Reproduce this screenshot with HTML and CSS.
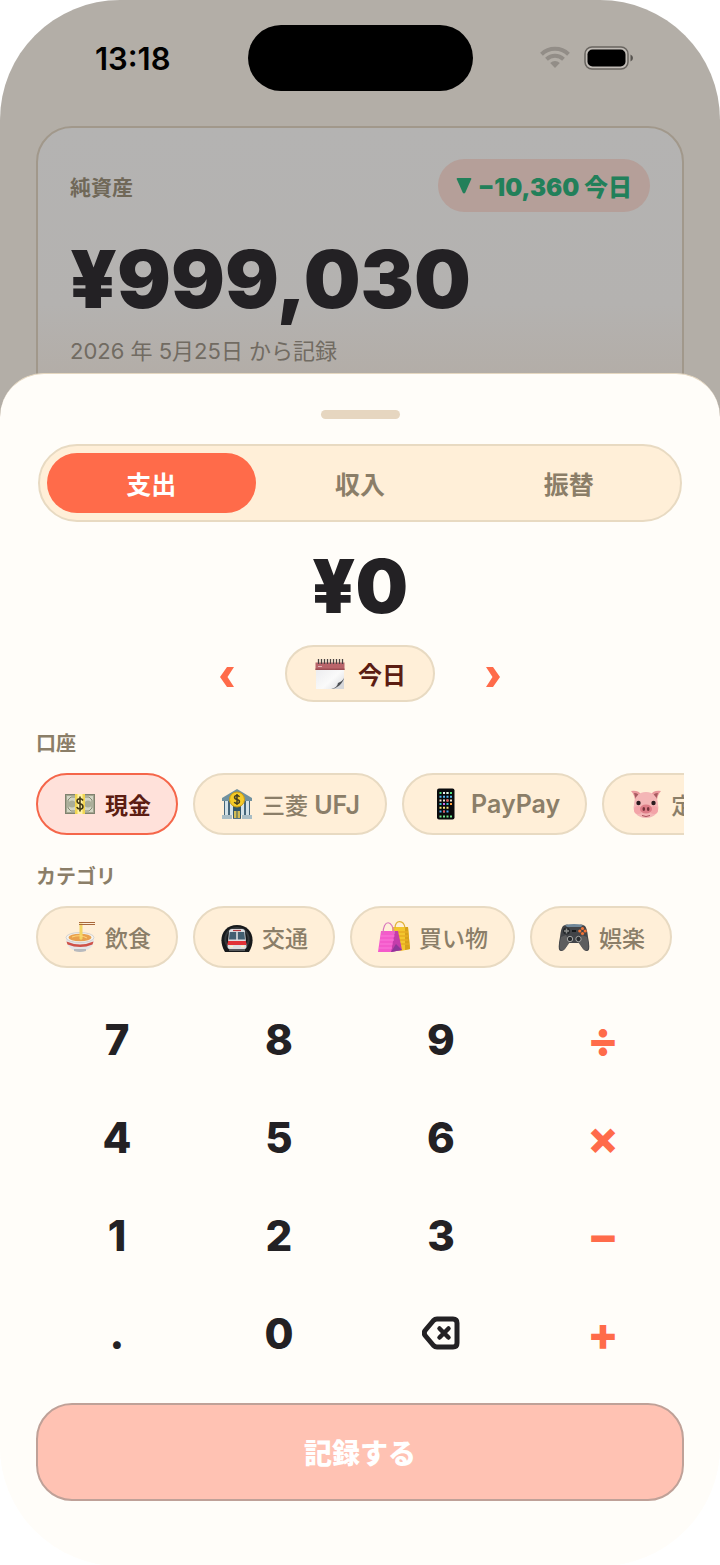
FILE: index.html
```html
<!DOCTYPE html>
<html lang="ja">
<head>
<meta charset="utf-8">
<meta name="viewport" content="width=device-width, initial-scale=1">
<title>記録</title>
<link rel="stylesheet" href="styles.css">
</head>
<body>
<div class="phone">
  <div class="backdrop">
    <header class="status">
      <time class="clock">13:18</time>
      <div class="island"></div>
      <div class="status-icons">
        <svg class="wifi" viewBox="0 0 30 22" aria-hidden="true"><g fill="none" stroke="currentColor" stroke-width="4"><path d="M1.500 8.200a19.500 19.500 0 0 1 27 0"/><path d="M6.500 13.200a12.500 12.500 0 0 1 17 0"/></g><path fill="currentColor" d="M10.200 17a7 7 0 0 1 9.600 0L15 22z"/></svg>
        <svg class="battery" viewBox="0 0 50 24" aria-hidden="true"><rect x="1" y="1" width="43" height="22" rx="7" fill="#c0bbb5" stroke="#68645f" stroke-width="1.500"/><rect x="3.500" y="3.500" width="38" height="17" rx="5" fill="#000"/><path d="M46.500 8.500q2.500 1 2.500 3.500t-2.500 3.500z" fill="#56524e"/></svg>
      </div>
    </header>
    <section class="worth">
      <div class="worth-head">
        <h2 class="worth-title">純資産</h2>
        <p class="delta"><svg class="delta-mark" viewBox="0 0 16 16" aria-hidden="true"><path d="M1.500 0h13q1.200 0 .7 1.200l-6 13.500q-1.200 1.500-2.400 0l-6-13.500Q.3 0 1.500 0z" fill="currentColor"/></svg><span>−10,360 今日</span></p>
      </div>
      <p class="worth-sum">¥999,030</p>
      <p class="worth-since">2026 年 5月25日 から記録</p>
    </section>
  </div>

  <main class="sheet">
    <div class="grabber"></div>
    <div class="segments">
      <button class="segment segment-on" type="button">支出</button>
      <button class="segment" type="button">収入</button>
      <button class="segment" type="button">振替</button>
    </div>
    <output class="amount">¥0</output>
    <div class="dates">
      <button class="step" type="button" aria-label="前の日"><svg viewBox="0 0 16 22" aria-hidden="true"><path d="M8 1h7L8.500 11 15 21H8L1 11z" fill="currentColor"/></svg></button>
      <button class="day" type="button">
        <svg class="emoji" viewBox="0 0 32 32" aria-hidden="true">
          <defs><linearGradient id="paper" x2="1" y2="1"><stop stop-color="#e9e9ec"/><stop offset=".6" stop-color="#fafafa"/><stop offset="1" stop-color="#d9dade"/></linearGradient></defs>
          <path d="M2 5h28v18l-8 8H2z" fill="url(#paper)"/><path d="M1.500 4.500h29V12h-29z" fill="#b9646a"/><path d="M1.500 10.500h29V12h-29z" fill="#9c4d53"/><path d="M4 8.500h4" stroke="#e0b5b6"/>
          <path d="M4.500 1v5M7.500 1v5M10.500 1v5M13.500 1v5M16.500 1v5M19.500 1v5M22.500 1v5M25.500 1v5M28.500 1v5" stroke="#4a4444" stroke-width="1.300"/>
          <path d="M17 31c6-1 6-5 6-6 4 0 7-3 7-7v13z" fill="#d6d7da"/><path d="M17 31c6-1 7-5 7-6 3-1 5-3 6-5-1 5-7 11-13 11z" fill="#4d5054"/>
        </svg>
        <span>今日</span>
      </button>
      <button class="step" type="button" aria-label="次の日"><svg viewBox="0 0 16 22" aria-hidden="true"><path d="M8 1H1l6.500 10L1 21h7l7-10z" fill="currentColor"/></svg></button>
    </div>

    <h3 class="label">口座</h3>
    <div class="chips">
      <button class="chip chip-on" type="button">
        <svg class="emoji" viewBox="0 0 32 32" aria-hidden="true"><path d="M1 6h30v20H1z" fill="#7f826f"/><path d="M2.500 7.500h27v17h-27z" fill="#d3d5c4" stroke="#a3a590"/><path d="M4 12l3-3h18l3 3v8l-3 3H7l-3-3z" fill="none" stroke="#888b76"/><circle cx="8" cy="16" r="3.500" fill="#a9ad98"/><circle cx="24" cy="16" r="3.500" fill="#a9ad98"/><path d="M11 6h10v20H11z" fill="#f2d552"/><path d="M13.500 6h5v20h-5z" fill="#fff3a8"/><path d="M19 12.500q-1-1.700-3-1.700c-4 0-3.800 4.300 0 5s4 5.200 0 5.200q-2.500 0-3.200-2M16 8.500v15" fill="none" stroke="#423817" stroke-width="1.600"/></svg>
        <span>現金</span>
      </button>
      <button class="chip" type="button">
        <svg class="emoji" viewBox="0 0 32 32" aria-hidden="true"><path d="M1 10L16 1l15 9v3H1z" fill="#70919f"/><path d="M3 13h26v14H3z" fill="#45667a"/><path d="M4 13h3v14H4zM9 13h3v14H9zM20 13h3v14h-3zM25 13h3v14h-3z" fill="#d4e2e8"/><path d="M12 16h8v14h-8z" fill="#325668"/><path d="M13 23h2.500v7H13zM16.500 23H19v7h-2.500z" fill="#d3bc54"/><path d="M1 27h10v4H1zM21 27h10v4H21z" fill="#a9bdc5"/><path d="M12 30h8v1h-8z" fill="#567485"/><circle cx="16" cy="11.500" r="7.500" fill="#f5cb28" stroke="#c99a12"/><path d="M18.500 8.800q-.8-1.300-2.500-1.300c-3.300 0-3.200 3.400 0 4s3.300 4 0 4q-2 0-2.700-1.500M16 6v11" fill="none" stroke="#463f21" stroke-width="1.500"/></svg>
        <span>三菱 <span class="latin">UFJ</span></span>
      </button>
      <button class="chip" type="button">
        <svg class="emoji" viewBox="0 0 32 32" aria-hidden="true"><rect x="7" y="0.500" width="17.500" height="31" rx="2" fill="#090a0c"/><g fill="none" stroke-width="2" stroke-dasharray="2 1.500"><path d="M9.500 5h13" stroke="#54e179"/><path d="M13 5h2M16.500 5h2" stroke="#eee"/><path d="M9.500 8.700h13" stroke="#55b9ed"/><path d="M9.500 12.400h13" stroke="#f7ead3"/><path d="M16.500 12.400h2" stroke="#f05354"/><path d="M9.500 16.100h13" stroke="#36c6d1"/><path d="M13 16.100h2" stroke="#c96ff0"/><path d="M20 16.100h2" stroke="#ff9e3b"/><path d="M9.500 19.800h9" stroke="#f5e77a"/><path d="M9.500 23.500h9" stroke="#4ba8f5"/><path d="M13 23.500h2" stroke="#ee5353"/><path d="M9.500 28.500h13" stroke="#71e68d"/></g></svg>
        <span class="latin">PayPay</span>
      </button>
      <button class="chip" type="button">
        <svg class="emoji" viewBox="0 0 32 32" aria-hidden="true"><path d="M1 3q8-1 10 4l-6 7Q5 7 1 3zM31 3q-8-1-10 4l6 7q0-7 4-11z" fill="#e9979b"/><path d="M4 5q5 0 5 4l-3 3zM28 5q-5 0-5 4l3 3z" fill="#a75b60"/><path d="M16 4c8 0 12 6 12 13 2 6-3 13-12 13S2 23 4 17C4 10 8 4 16 4z" fill="#f4b6b6"/><ellipse cx="8" cy="22" rx="4" ry="4" fill="#f3a4a8"/><ellipse cx="24" cy="22" rx="4" ry="4" fill="#f3a4a8"/><ellipse cx="16" cy="21" rx="6" ry="4.500" fill="#dd7c86"/><ellipse cx="13.800" cy="21" rx="1.300" ry="2" fill="#75323a"/><ellipse cx="18.200" cy="21" rx="1.300" ry="2" fill="#75323a"/><circle cx="8.500" cy="15" r="2.200" fill="#291b1e"/><circle cx="23.500" cy="15" r="2.200" fill="#291b1e"/><path d="M12 27.500q4 2 8 0" fill="none" stroke="#a9505a"/></svg>
        <span>定期</span>
      </button>
    </div>

    <h3 class="label">カテゴリ</h3>
    <div class="chips">
      <button class="chip" type="button">
        <svg class="emoji" viewBox="0 0 32 32" aria-hidden="true"><path d="M2 17c0 7 4 10 7 12h14c4-2 7-5 7-12z" fill="#e5e5e7"/><path d="M2.500 20.500q13.500 6 27 0l-1 3q-12 5-25 0z" fill="#cf5148"/><path d="M10 28h12v2q-6 2-12 0z" fill="#b8babe"/><ellipse cx="16" cy="16.500" rx="14" ry="5" fill="#f4f3ef" stroke="#c5c5c7" stroke-width=".7"/><ellipse cx="16" cy="16.500" rx="11.500" ry="3.800" fill="#e9a04e"/><path d="M15.500 18V2.500h3V18q-1.500 1.500-3 0z" fill="#f3d563"/><path d="M8 16q8-3 15 1" fill="none" stroke="#ffd778"/><path d="M15 1.500h16M15 3.500h16" fill="none" stroke="#a8683c" stroke-width="1.200"/></svg>
        <span>飲食</span>
      </button>
      <button class="chip" type="button">
        <svg class="emoji" viewBox="0 0 32 32" aria-hidden="true"><path d="M4 31C-4 18 2 4 16 4s20 14 12 27z" fill="#17191b"/><path d="M7 26C1 17 6 7 16 7s15 10 9 19" fill="none" stroke="#34383b" stroke-width="2"/><path d="M8 11q0-3 3-3h10q3 0 3 3l1.500 15q0 2-2 2h-15q-2 0-2-2z" fill="#dedfe2"/><path d="M8.700 11h6.500v7.500H8zM16.800 11h6.500l.7 7.500h-7.200z" fill="#425f71"/><path d="M7 20h18l.5 4H6.500z" fill="#e13238"/><path d="M9 25.500h3M20 25.500h3" stroke="#fff4c2" stroke-width="1.500"/><path d="M8 28h16v2H8z" fill="#55585b"/><path d="M12 9.500h8" stroke="#b53a3e" stroke-width="1.200"/></svg>
        <span>交通</span>
      </button>
      <button class="chip" type="button">
        <svg class="emoji" viewBox="0 0 32 32" aria-hidden="true"><path d="M14 6h16l2 22-9 2-8-2z" fill="#f3c62d"/><path d="M27 6h3l2 22-5 1z" fill="#d7a11a"/><path d="M16 11h14M16 15h14M16 19h14M16 23h15" stroke="#e7ac22" stroke-width="1.300"/><path d="M17 7c0-9 9-8 10 0" fill="none" stroke="#e0b238" stroke-width="1.200"/><path d="M3 10h16l4 19-10 2H0z" fill="#f45acb"/><path d="M17 10h3l4 19-11 2z" fill="#c43cab"/><path d="M13 31l5-8 6 6z" fill="#8e3799"/><path d="M2.500 15h14M2 19h14M1.500 23h13M1 27h13" stroke="#fa78d9"/><path d="M5 13C5-2 15-2 16 13" fill="none" stroke="#d876bd" stroke-width="1.200"/></svg>
        <span>買い物</span>
      </button>
      <button class="chip" type="button">
        <svg class="emoji" viewBox="0 0 32 32" aria-hidden="true"><path d="M5 5q4-3 8 0h6q4-3 8 0 2 2 3 11 3 14-1 14-3 1-7-8H10q-4 9-7 8-4 0-1-14Q3 7 5 5z" fill="#424448"/><path d="M3 16l5-2 4 7-5 7q-3 3-5 0-1-4 1-12zM29 16l-5-2-4 7 5 7q3 3 5 0 1-4-1-12z" fill="#5d5d5e"/><path d="M7 4q9-2 18 0l-2 2H9z" fill="#71889a"/><circle cx="8.500" cy="10" r="3.500" fill="#25282b"/><path d="M8.500 7.500v5M6 10h5" stroke="#8b8c8b" stroke-width="1.500"/><circle cx="12" cy="18" r="2.700" fill="#292c2f" stroke="#a5a5a3"/><circle cx="20.500" cy="18" r="2.700" fill="#292c2f" stroke="#a5a5a3"/><g fill="#f37436"><circle cx="24.500" cy="7.500" r="1.600"/><circle cx="21.800" cy="10" r="1.600"/><circle cx="27.200" cy="10" r="1.600"/><circle cx="24.500" cy="12.500" r="1.600"/></g><path d="M14 10h4" stroke="#17191b" stroke-width="2"/></svg>
        <span>娯楽</span>
      </button>
    </div>

    <div class="keys">
      <button class="key" type="button">7</button><button class="key" type="button">8</button><button class="key" type="button">9</button><button class="key key-op" type="button">÷</button>
      <button class="key" type="button">4</button><button class="key" type="button">5</button><button class="key" type="button">6</button><button class="key key-op" type="button">×</button>
      <button class="key" type="button">1</button><button class="key" type="button">2</button><button class="key" type="button">3</button><button class="key key-op" type="button">−</button>
      <button class="key" type="button">.</button><button class="key" type="button">0</button>
      <button class="key" type="button" aria-label="削除"><svg class="erase" viewBox="0 0 38 34" fill="none" stroke="currentColor" stroke-linecap="round" stroke-linejoin="round" aria-hidden="true"><path d="M15 3h16q4 0 4 4v20q0 4-4 4H15q-2 0-3.500-1.500L3.500 20q-2.500-3 0-6l8-9.500Q13 3 15 3z" stroke-width="5"/><path d="M17.500 12.500l9 9M26.500 12.500l-9 9" stroke-width="4.500"/></svg></button>
      <button class="key key-op" type="button">+</button>
    </div>
    <button class="save" type="button">記録する</button>
  </main>
</div>
</body>
</html>
```
FILE: styles.css
```css
* {
  box-sizing: border-box;
}

body {
  margin: 0;
  background: #fff;
  color: #232124;
  font-family: Inter, "Noto Sans CJK JP", sans-serif;
}

h2, h3, p {
  margin: 0;
}

button {
  margin: 0;
  padding: 0;
  border: 0;
  background: none;
  color: inherit;
  font: inherit;
  white-space: nowrap;
}

svg {
  display: block;
  flex: none;
}

.phone {
  overflow: hidden;
  border-radius: 120px;
  background: linear-gradient(#b3aea7 50%, #fffdf9 50%);
}

.backdrop {
  padding: 25px 36px 0;
}

/* status bar */
.status {
  display: grid;
  grid-template-columns: 1fr 225px 1fr;
  align-items: center;
  color: #000;
}

.clock {
  padding-right: 18px;
  font-size: 31px;
  font-weight: 600;
  text-align: center;
}

.island {
  height: 66px;
  border-radius: 33px;
  background: #000;
}

.status-icons {
  display: flex;
  justify-content: center;
  gap: 14px;
  padding-left: 18px;
}

.wifi {
  width: 30px;
  height: 22px;
  color: #928d87;
}

.battery {
  width: 50px;
  height: 24px;
}

/* net worth card */
.worth {
  margin-top: 35px;
  padding: 31px 32px 56px;
  border: 2px solid #a1988b;
  border-radius: 36px;
  background: linear-gradient(#b4b3b2, #b4b2b0 60%, #b3ada7 85%);
}

.worth-head {
  display: flex;
  align-items: center;
  justify-content: space-between;
}

.worth-title {
  color: #706858;
  font-size: 21px;
  font-weight: 700;
}

.delta {
  display: flex;
  align-items: center;
  gap: 6px;
  height: 53px;
  padding: 0 18px;
  border-radius: 27px;
  background: #b59f99;
  color: #22805a;
  font-size: 24px;
  font-weight: 900;
}

.delta-mark {
  width: 16px;
  height: 16px;
}

.worth-sum {
  margin-top: 19px;
  font-size: 80px;
  font-weight: 900;
  line-height: 96px;
}

.worth-since {
  margin-top: 9px;
  color: #716b62;
  font-size: 22px;
  line-height: 30px;
}

/* entry sheet */
.sheet {
  display: flex;
  flex-direction: column;
  margin-top: -51px;
  padding: 36px 36px 65px;
  border-top: 1px solid #e5d7c0;
  border-radius: 44px 44px 0 0;
  background: #fffdf9;
  position: relative;
}

.grabber {
  align-self: center;
  width: 79px;
  height: 9px;
  border-radius: 5px;
  background: #e6d6c0;
}

.segments {
  display: grid;
  grid-template-columns: repeat(3, 1fr);
  margin: 25px 2px 0;
  padding: 7px;
  border: 2px solid #e8dac2;
  border-radius: 39px;
  background: #ffefd8;
}

.segment {
  height: 60px;
  border-radius: 30px;
  color: #8b7e68;
  font-size: 25px;
  font-weight: 700;
}

.segment-on {
  background: #ff6b4a;
  color: #fff;
}

.amount {
  margin-top: 20px;
  font-size: 74px;
  font-weight: 900;
  line-height: 88px;
  text-align: center;
}

.dates {
  display: flex;
  align-items: center;
  justify-content: center;
  gap: 28px;
  margin-top: 15px;
}

.step {
  display: grid;
  place-items: center;
  width: 60px;
  height: 56px;
  padding-top: 7px;
  color: #ff6b4a;
}

.step svg {
  width: 16px;
  height: 22px;
}

.day,
.chip {
  display: flex;
  flex: none;
  align-items: center;
  gap: 9px;
  height: 62px;
  padding: 0 25px 0 26px;
  border: 2px solid #e8dac2;
  border-radius: 31px;
  background: #ffefd8;
  color: #8b7e68;
  font-size: 23px;
  font-weight: 500;
}

.day {
  gap: 12px;
  height: 57px;
  padding: 0 27px;
  color: #5c1d12;
  font-size: 24px;
  font-weight: 700;
}

.latin {
  font-size: 25px;
  font-weight: 600;
}

.emoji {
  width: 32px;
  height: 32px;
}

.label {
  margin-top: 28px;
  color: #8b7e68;
  font-size: 20px;
  font-weight: 700;
  line-height: 28px;
}

.chips {
  display: flex;
  gap: 15px;
  margin-top: 15px;
  overflow: hidden;
}

.chip-on {
  border-color: #f5664a;
  background: #ffe1da;
  color: #5c1d12;
  font-weight: 700;
}

/* keypad */
.keys {
  display: grid;
  grid-template-columns: repeat(4, 1fr);
  grid-auto-rows: 98px;
  margin-top: 22px;
}

.key {
  display: grid;
  place-items: center;
  font-size: 42px;
  font-weight: 800;
}

.key-op {
  color: #ff6b4a;
  font-size: 46px;
}

.erase {
  width: 38px;
  height: 34px;
}

.save {
  height: 98px;
  margin-top: 21px;
  border: 2px solid #bfa198;
  border-radius: 36px;
  background: #ffc2b3;
  color: #fff;
  font-size: 28px;
  font-weight: 900;
}
```
